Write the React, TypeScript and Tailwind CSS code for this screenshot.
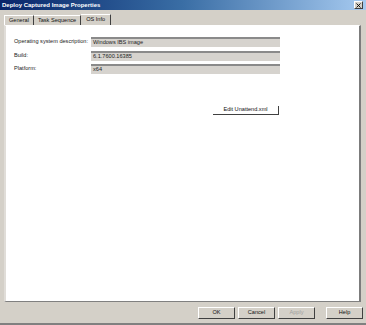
import { X } from 'lucide-react';

const font = { fontFamily: '"Liberation Sans", Arial, sans-serif' };

const Field = ({ label, value }: { label: string; value: string }) => (
  <div className="flex items-center h-[10px]">
    <span className="w-[77px] whitespace-nowrap text-[5.6px] text-[#222] leading-none">{label}</span>
    <div className="w-[189px] h-[10px] bg-[#d6d3ce] border-t-2 border-[#8a8a8a] flex items-center px-[2px] text-[5.6px] leading-none text-[#222]">
      {value}
    </div>
  </div>
);

const DlgButton = ({ children, disabled }: { children: string; disabled?: boolean }) => (
  <button
    className={`w-[37px] h-[12px] bg-[#d4d0c8] border border-t-white border-l-white border-b-[#404040] border-r-[#404040] text-[5.6px] leading-none ${
      disabled ? 'text-[#a0a0a0]' : 'text-[#111]'
    }`}
  >
    {children}
  </button>
);

export default function App() {
  return (
    <div className="w-[366px] h-[325px] bg-[#d4d0c8] flex flex-col overflow-hidden" style={font}>
      <div className="h-[10px] flex items-center justify-between bg-gradient-to-r from-[#0a246a] via-[#3a6ea5] to-[#a6caf0] pl-[2px] pr-[3px]">
        <span className="text-white font-bold text-[6px] leading-none">Deploy Captured Image Properties</span>
        <div className="w-[9px] h-[8px] bg-[#d4d0c8] border border-t-white border-l-white border-b-[#404040] border-r-[#404040] flex items-center justify-center">
          <X size={7} strokeWidth={3} color="#000" />
        </div>
      </div>
      <div className="h-[4px]" />
      <div className="flex items-end h-[11px] pl-[4px] text-[5.6px] leading-none text-[#111]">
        <div className="h-[10px] px-[4px] flex items-center border-t border-l border-white border-r border-r-[#404040]">General</div>
        <div className="h-[10px] px-[4px] flex items-center border-t border-white border-r border-r-[#404040]">Task Sequence</div>
        <div className="h-[11px] px-[5px] flex items-center border-t border-white border-r border-r-[#404040] bg-[#d4d0c8]">OS Info</div>
      </div>
      <div className="mx-[4px] mr-[5px] h-[277px] bg-white border-l-2 border-l-[#e0ddd8] border-r-2 border-r-[#7c7c7c] border-b border-b-[#808080] border-t border-t-white">
        <div className="pt-[11px] pl-[8px] flex flex-col gap-[3.5px]">
          <Field label="Operating system description:" value="Windows IBS image" />
          <Field label="Build:" value="6.1.7600.16385" />
          <Field label="Platform:" value="x64" />
        </div>
        <div className="pl-[207px] pt-[20px]">
          <button className="w-[66px] h-[9px] bg-white border-b border-r border-b-[#404040] border-r-[#404040] text-[5.6px] leading-none text-[#111]">
            Edit Unattend.xml
          </button>
        </div>
      </div>
      <div className="flex-1 flex items-start justify-end pt-[5px] pr-[3px] gap-[3px]">
        <DlgButton>OK</DlgButton>
        <DlgButton>Cancel</DlgButton>
        <DlgButton disabled>Apply</DlgButton>
        <div className="w-[5px]" />
        <DlgButton>Help</DlgButton>
      </div>
      <div className="h-[2px] bg-[#808080]" />
    </div>
  );
}
